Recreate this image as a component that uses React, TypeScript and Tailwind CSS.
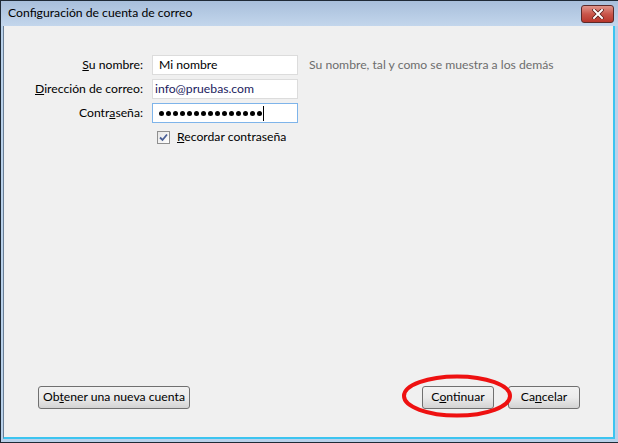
export default function App() {
  return (
    <div
      className="w-[618px] h-[443px] flex flex-col bg-[#b9d1ea] border border-[#1f2a36] border-r-0 text-[12.2px] text-black"
      style={{ fontFamily: 'Lato, "Segoe UI", sans-serif' }}
    >
      {/* barra de título */}
      <div className="h-[25px] flex items-center justify-between pl-[7px] pr-[4px] bg-gradient-to-b from-[#a8bfdb] to-[#c3d6ec]">
        <span className="leading-none">Configuración de cuenta de correo</span>
        <div className="w-[33px] h-[18px] flex items-center justify-center rounded-[3px] border border-[#5a2a2a] bg-gradient-to-b from-[#e0948a] via-[#c9564b] to-[#b8352b]">
          <svg width="12" height="10" viewBox="0 0 12 10">
            <path d="M2 1 L10 9 M10 1 L2 9" stroke="#5a1d1a" strokeWidth="3.6" strokeLinecap="square" />
            <path d="M2 1 L10 9 M10 1 L2 9" stroke="#ffffff" strokeWidth="2" strokeLinecap="square" />
          </svg>
        </div>
      </div>

      {/* contenido */}
      <div className="flex-1 flex flex-col ml-[2px] mr-[3px] mb-[3px] bg-[#f0f0f0] border-l border-[#6b7f96] border-r-[2px] border-r-[#3cc4f0] border-b-[2px] border-b-[#3cc4f0]">
        <div className="grid grid-cols-[139px_146px_auto] gap-x-[9px] gap-y-[4px] pt-[29px] items-center">
          <label className="text-right">
            <span className="underline">S</span>u nombre:
          </label>
          <div className="h-[20px] flex items-center px-[6px] bg-white border border-[#dcdcdc]">Mi nombre</div>
          <span className="ml-[2px] text-[#6d6d6d] whitespace-nowrap">Su nombre, tal y como se muestra a los demás</span>

          <label className="text-right">
            <span className="underline">D</span>irección de correo:
          </label>
          <div className="h-[20px] flex items-center px-[2px] bg-white border border-[#dcdcdc] text-[#1b1b5e]">
            info@pruebas.com
          </div>
          <span />

          <label className="text-right">
            Contr<span className="underline">a</span>seña:
          </label>
          <div className="h-[20px] flex items-center px-[6px] bg-white border border-[#7eb4ea]">
            <div className="flex gap-[2px]">
              {Array.from({ length: 15 }).map((_, i) => (
                <span key={i} className="w-[5px] h-[5px] rounded-full bg-black" />
              ))}
            </div>
            <span className="ml-[1px] w-px h-[15px] bg-black" />
          </div>
          <span />

          <span />
          <div className="flex items-center gap-[7px] pl-[5px] pt-[1px]">
            <div className="w-[13px] h-[13px] border border-[#8f8f8f] bg-gradient-to-br from-[#e6e6e6] to-[#ffffff] flex items-center justify-center">
              <svg width="9" height="9" viewBox="0 0 9 9">
                <path d="M1 4.5 L3.5 7 L8 1.5" fill="none" stroke="#4a5f97" strokeWidth="1.8" />
              </svg>
            </div>
            <span className="whitespace-nowrap">
              <span className="underline">R</span>ecordar contraseña
            </span>
          </div>
          <span />
        </div>

        <div className="mt-auto flex items-center justify-between pl-[34px] pr-[33px] pb-[28px]">
          <button className="w-[152px] h-[23px] rounded-[3px] border border-[#707070] bg-gradient-to-b from-[#f2f2f2] via-[#ebebeb] to-[#d3d3d3]">
            Ob<span className="underline">t</span>ener una nueva cuenta
          </button>
          <div className="flex items-center gap-[14px]">
            <div className="relative">
              <button className="w-[72px] h-[23px] rounded-[3px] border border-[#707070] bg-gradient-to-b from-[#f2f2f2] via-[#ebebeb] to-[#d3d3d3]">
                C<span className="underline">o</span>ntinuar
              </button>
              <svg
                className="absolute left-[-21px] top-[-12px] pointer-events-none"
                width="114"
                height="46"
                viewBox="0 0 114 46"
              >
                <ellipse cx="56" cy="22" rx="53" ry="19.5" fill="none" stroke="#ee1111" strokeWidth="4" />
              </svg>
            </div>
            <button className="w-[72px] h-[23px] rounded-[3px] border border-[#707070] bg-gradient-to-b from-[#f2f2f2] via-[#ebebeb] to-[#d3d3d3]">
              Ca<span className="underline">n</span>celar
            </button>
          </div>
        </div>
      </div>
    </div>
  );
}
